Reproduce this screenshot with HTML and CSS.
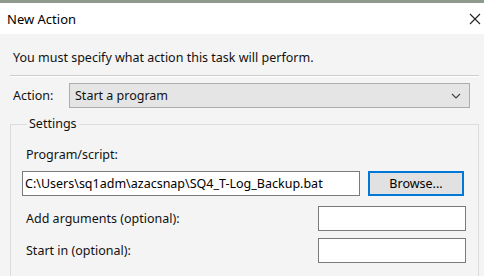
FILE: index.html
```html
<!DOCTYPE html>
<html lang="en">
<head>
    <meta charset="UTF-8">
    <meta name="viewport" content="width=device-width, initial-scale=1.0">
    <title>New Action</title>
    <link rel="stylesheet" href="styles.css">
</head>
<body>
    <div class="behind"></div>
    <div class="dialog">
        <!-- Title bar -->
        <div class="titlebar">
            <span class="title">New Action</span>
            <svg class="close" width="12" height="12" viewBox="0 0 12 12">
                <path d="M1 1 L11 11 M11 1 L1 11" stroke="#222" stroke-width="1.1" fill="none"/>
            </svg>
        </div>

        <div class="content">
            <p class="intro">You must specify what action this task will perform.</p>
            <div class="separator"></div>

            <div class="action-row">
                <label for="action">Action:</label>
                <div class="combo" id="action">
                    <span>Start a program</span>
                    <svg width="10" height="6" viewBox="0 0 10 6">
                        <path d="M1 1 L5 5 L9 1" stroke="#444" stroke-width="1.2" fill="none"/>
                    </svg>
                </div>
            </div>

            <!-- Settings group -->
            <fieldset class="settings">
                <legend>Settings</legend>
                <div class="field-label">Program/script:</div>
                <div class="program-row">
                    <input type="text" class="program" value="C:\Users\sq1adm\azacsnap\SQ4_T-Log_Backup.bat">
                    <button type="button" class="browse">Browse...</button>
                </div>
                <div class="opt-row">
                    <label for="args">Add arguments (optional):</label>
                    <input type="text" id="args" class="opt">
                </div>
                <div class="opt-row">
                    <label for="startin">Start in (optional):</label>
                    <input type="text" id="startin" class="opt">
                </div>
            </fieldset>
        </div>
    </div>
</body>
</html>
```

FILE: styles.css
```css
html, body {
    margin: 0;
    padding: 0;
    height: 100%;
    overflow: hidden;
}
body {
    font-family: "Noto Sans", "Open Sans", sans-serif;
    font-size: 12.5px;
    color: #111;
    background: #f4f4f4;
}
.behind {
    height: 3px;
    background: #8f9a8f;
}
.titlebar {
    height: 31px;
    background: #fff;
    display: flex;
    align-items: center;
    justify-content: space-between;
    padding: 0 3px 0 7px;
}
.title {
    font-size: 13px;
    color: #000;
}
.content {
    padding: 16px 5px 0 10px;
}
.intro {
    margin: 0 0 9px 3px;
    line-height: 16px;
}
.separator {
    border-top: 1px solid #cdcdcd;
    border-bottom: 1px solid #fff;
}
.action-row {
    display: flex;
    align-items: center;
    margin-top: 6px;
}
.action-row label {
    width: 56px;
    padding-left: 3px;
}
.combo {
    flex: 1;
    height: 25px;
    box-sizing: border-box;
    margin-right: 9px;
    border: 1px solid #adadad;
    background: #e5e5e5;
    display: flex;
    align-items: center;
    justify-content: space-between;
    padding: 0 8px 0 5px;
}
.settings {
    margin: 8px 0 0 0;
    border: 1px solid #dcdcdc;
    border-bottom: none;
    padding: 15px 12px 20px 11px;
}
.settings legend {
    padding: 0 2px;
    margin-left: 5px;
    line-height: 16px;
}
.field-label {
    padding-left: 4px;
    line-height: 16px;
}
.program-row {
    display: flex;
    align-items: center;
    gap: 8px;
    margin-top: 8px;
}
input[type="text"] {
    font-family: inherit;
    font-size: 12.5px;
    color: #000;
    box-sizing: border-box;
    height: 25px;
    border: 1px solid #7a7a7a;
    background: #fff;
    padding: 0 2px;
    outline: none;
}
.program {
    width: 338px;
}
.browse {
    width: 96px;
    height: 25px;
    box-sizing: border-box;
    font-family: inherit;
    font-size: 12.5px;
    color: #000;
    background: #e1e1e1;
    border: 2px solid #0078d7;
}
.opt-row {
    display: flex;
    align-items: center;
    justify-content: space-between;
    margin-top: 7px;
}
.program-row + .opt-row {
    margin-top: 10px;
}
.opt-row label {
    padding-left: 4px;
}
.opt {
    width: 148px;
}
```
